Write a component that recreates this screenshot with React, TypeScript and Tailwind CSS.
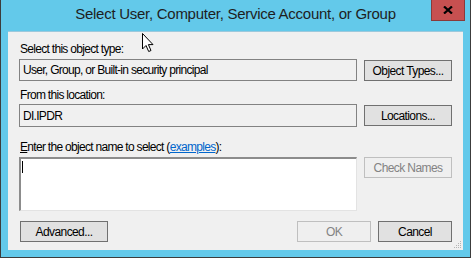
import React from 'react';

const font = { fontFamily: '"Liberation Sans", Arial, sans-serif' };

function Btn({ children, disabled, className = '' }: { children: React.ReactNode; disabled?: boolean; className?: string }) {
  return (
    <div
      className={`flex h-[21px] items-center justify-center border text-[12px] tracking-[-0.6px] ${
        disabled ? 'border-[#bfbfbf] bg-[#efefef] text-[#838383]' : 'border-[#707070] bg-[#e1e1e1] text-black'
      } ${className}`}
    >
      {children}
    </div>
  );
}

function Cursor() {
  return (
    <svg className="absolute left-[141px] top-[32px]" width="13" height="21" viewBox="0 0 13 21">
      <path
        d="M1.5 1.5 L1.5 17 L5 13.5 L7.7 19.5 L10 18.5 L7.4 12.6 L12 12.6 Z"
        fill="#fff"
        stroke="#000"
        strokeWidth="1"
        strokeLinejoin="miter"
      />
    </svg>
  );
}

export default function App() {
  return (
    <div className="relative h-[258px] w-[471px] overflow-hidden" style={font}>
      <div className="flex h-full w-full flex-col border-x border-b border-[#3c3c3c] bg-[#63c9ea] px-[7px] pb-[7px]">
        {/* title bar */}
        <div className="relative flex h-[31px] shrink-0 items-center justify-center">
          <span className="-mt-[2px] text-[15px] tracking-[-0.27px] text-[#1e1e1e]">
            Select User, Computer, Service Account, or Group
          </span>
          <div className="absolute right-[-2px] top-0 flex h-[21px] w-[34px] items-center justify-center border border-t-0 border-[#8a3a3a] bg-[#c75050]">
            <svg width="10" height="8" viewBox="0 0 10 8">
              <path d="M1 0.5 L9 7.5 M9 0.5 L1 7.5" stroke="#000" strokeWidth="2.2" />
            </svg>
          </div>
        </div>

        {/* client area */}
        <div className="flex flex-1 flex-col border-t border-[#9cc9dc] bg-[#f0f0f0] pl-[11px] pr-[11px] pt-[9px] text-[12px] tracking-[-0.7px] text-black">
          <div className="h-[16px] pl-px leading-[16px]">Select this object type:</div>
          <div className="mt-[2px] flex gap-[7px]">
            <div className="flex h-[22px] flex-1 items-center border border-[#828282] pl-[3px]">
              User, Group, or Built-in security principal
            </div>
            <Btn className="mt-px w-[88px]">Object Types...</Btn>
          </div>

          <div className="mt-[6px] h-[16px] pl-px leading-[16px]">From this location:</div>
          <div className="mt-[1px] flex gap-[7px]">
            <div className="flex h-[23px] flex-1 items-center border border-[#828282] pl-[3px]">DI.IPDR</div>
            <Btn className="mt-px w-[88px]">Locations...</Btn>
          </div>

          <div className="mt-[12px] h-[16px] pl-px leading-[16px]">
            <span className="underline">E</span>nter the object name to select (
            <span className="text-[#0066cc] underline">examples</span>):
          </div>
          <div className="mt-[2px] flex gap-[7px]">
            <div className="h-[54px] flex-1 border-l-2 border-t-2 border-b border-r border-l-[#8c8c8c] border-t-[#8c8c8c] border-b-[#e3e3e3] border-r-[#e3e3e3] bg-white">
              <div className="ml-[1px] mt-[2px] h-[12px] w-px bg-black" />
            </div>
            <Btn disabled className="w-[88px]">Check Names</Btn>
          </div>

          <div className="mt-[10px] flex">
            <Btn className="ml-px w-[88px]">Advanced...</Btn>
            <div className="flex-1" />
            <Btn disabled className="w-[74px]">OK</Btn>
            <Btn className="ml-[7px] w-[74px]">Cancel</Btn>
          </div>
          <div className="relative flex-1">
            <svg className="absolute bottom-[1px] right-[-10px]" width="8" height="8" viewBox="0 0 8 8">
              <g fill="#b4b4b4">
                <rect x="6" y="0" width="1" height="1" />
                <rect x="4" y="2" width="1" height="1" />
                <rect x="6" y="2" width="1" height="1" />
                <rect x="2" y="4" width="1" height="1" />
                <rect x="4" y="4" width="1" height="1" />
                <rect x="6" y="4" width="1" height="1" />
                <rect x="0" y="6" width="1" height="1" />
                <rect x="2" y="6" width="1" height="1" />
                <rect x="4" y="6" width="1" height="1" />
                <rect x="6" y="6" width="1" height="1" />
              </g>
            </svg>
          </div>
        </div>
      </div>
      <Cursor />
    </div>
  );
}
